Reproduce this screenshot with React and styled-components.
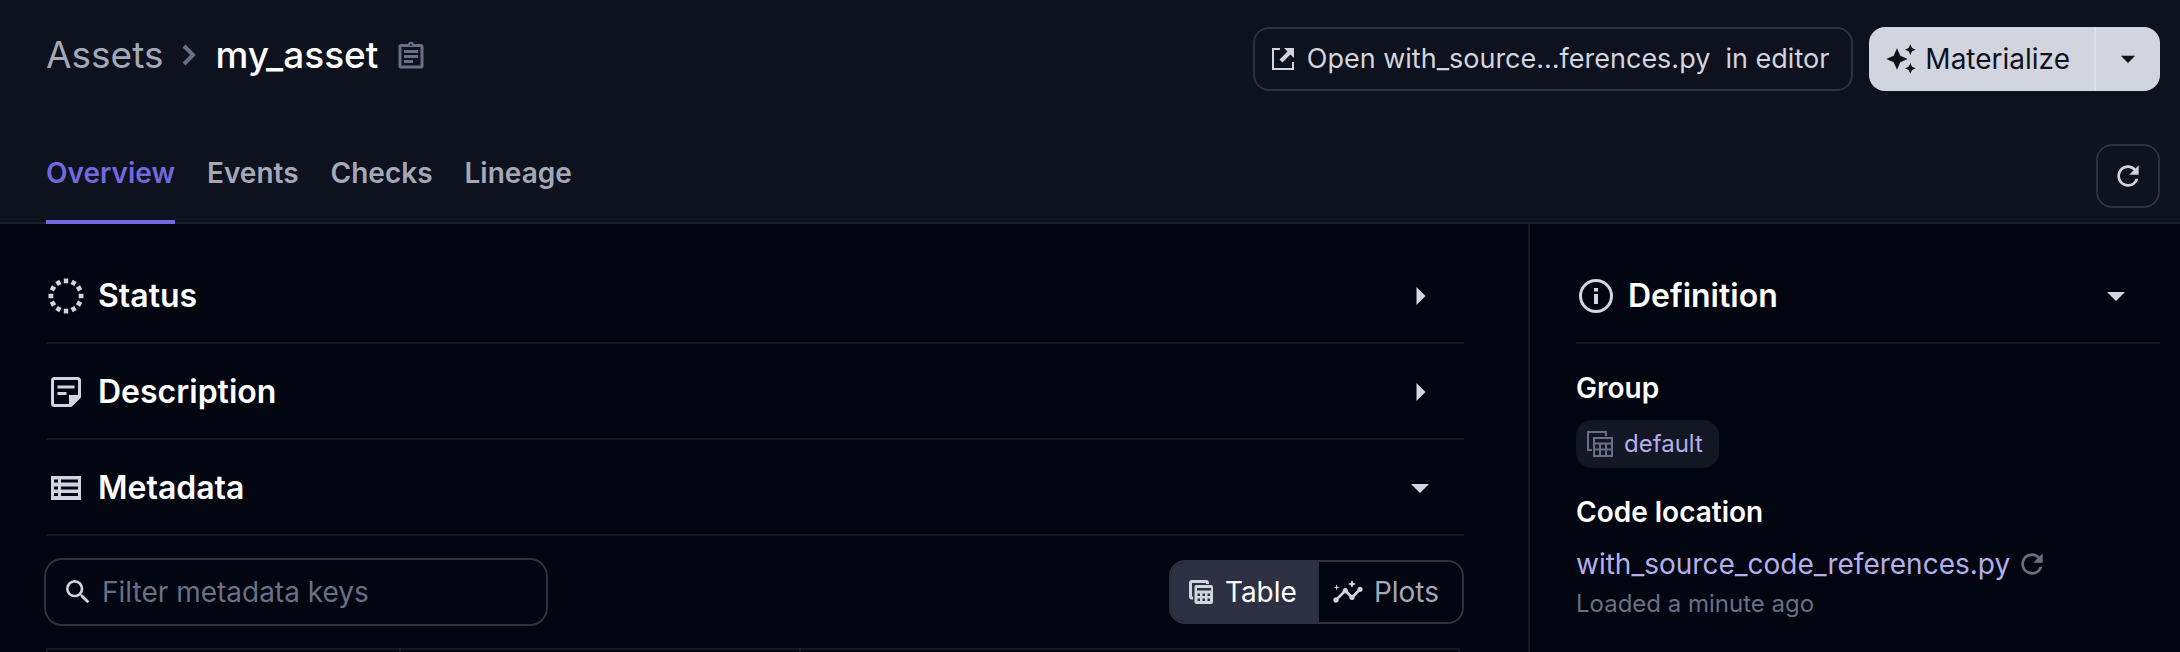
import React from "react";
import styled, { createGlobalStyle, css } from "styled-components";
import { MdAutoAwesome, MdInsights, MdRefresh, MdSearch } from "react-icons/md";

const c = {
  header: "#0e111e",
  page: "#030510",
  line: "#141724",
  headerLine: "#1b1e2b",
  control: "#2d3143",
  text: "#ffffff",
  light: "#d2d5de",
  muted: "#a4a8b7",
  dim: "#677084",
  accent: "#7169dd",
  link: "#b6aeec",
  tag: "#131623",
};

const GlobalStyle = createGlobalStyle`
  *, *::before, *::after { box-sizing: border-box; }
  body {
    margin: 0;
    overflow: hidden;
    background: ${c.page};
    color: ${c.text};
    font-family: Inter, "Liberation Sans", sans-serif;
    font-size: 28px;
    line-height: 40px;
  }
  button, input { font: inherit; color: inherit; margin: 0; }
  button { cursor: pointer; }
  a { text-decoration: none; color: inherit; }
  h1, h2, h3, p { margin: 0; }
  svg { display: block; flex: none; }
`;

const Page = styled.div`
  display: flex;
  flex-direction: column;
  height: 100vh;
`;

const Header = styled.header`
  flex: none;
  background: ${c.header};
  border-bottom: 2px solid ${c.headerLine};
  padding: 27px 20px 0 46px;
`;

const HeaderTop = styled.div`
  display: flex;
  justify-content: space-between;
  align-items: flex-start;
  height: 117px;
`;

const Breadcrumbs = styled.nav`
  display: flex;
  align-items: center;
  font-size: 37px;
  line-height: 55px;
  color: ${c.muted};

  h1 {
    font-size: inherit;
    font-weight: 500;
    color: ${c.text};
  }
`;

const CrumbChevron = styled.svg`
  margin: 0 17px;
  color: ${c.dim};
`;

const IconButton = styled.button`
  display: flex;
  padding: 0;
  margin-left: ${(p) => (p.$tight ? "6px" : "20px")};
  border: 0;
  background: none;
  color: ${c.dim};
`;

const Actions = styled.div`
  display: flex;
  gap: 16px;
`;

const Button = styled.button`
  display: flex;
  align-items: center;
  gap: 12px;
  height: 64px;
  padding: 0 22px 0 16px;
  border: 2px solid ${c.control};
  border-radius: 16px;
  background: transparent;
  color: ${c.light};
  font-size: 27px;
  white-space: pre;

  ${(p) =>
    p.$square &&
    css`
      justify-content: center;
      width: 64px;
      padding: 0;
    `}
`;

const SplitButton = styled.div`
  display: flex;
  height: 64px;
  border-radius: 16px;
  overflow: hidden;
  background: ${c.light};
  color: ${c.header};
`;

const SplitPart = styled.button`
  display: flex;
  align-items: center;
  justify-content: center;
  gap: 8px;
  border: 0;
  padding: ${(p) => (p.$menu ? "0" : "0 24px 0 16px")};
  width: ${(p) => (p.$menu ? "66px" : "auto")};
  border-left: ${(p) => (p.$menu ? "2px solid #dfe1e8" : "0")};
  background: transparent;
`;

const TabRow = styled.div`
  display: flex;
  justify-content: space-between;
  height: 78px;
`;

const Tabs = styled.nav`
  display: flex;
  gap: 32px;
  margin-bottom: -2px;
`;

const Tab = styled.a`
  padding-top: 9px;
  font-weight: 600;
  color: ${(p) => (p.$active ? c.accent : c.muted)};
  border-bottom: 4px solid ${(p) => (p.$active ? c.accent : "transparent")};
`;

const Body = styled.div`
  flex: 1;
  min-height: 0;
  display: flex;
  overflow: hidden;
`;

const Main = styled.main`
  flex: 1;
  min-width: 0;
  padding: 24px 64px 0 46px;
`;

const Aside = styled.aside`
  flex: 0 0 calc(30% - 2px);
  min-width: 0;
  border-left: 2px solid ${c.line};
  padding: 24px 20px 0 46px;
`;

const SectionHeader = styled.button`
  display: flex;
  align-items: center;
  gap: 12px;
  width: 100%;
  height: 96px;
  padding: 2px 24px 0 0;
  border: 0;
  border-bottom: 2px solid ${c.line};
  background: none;
  color: ${c.light};
  text-align: left;

  h2 {
    flex: 1;
    font-size: 32px;
    font-weight: 600;
    color: ${c.text};
  }
`;

const Toolbar = styled.div`
  display: flex;
  align-items: center;
  justify-content: space-between;
  height: 112px;
`;

const SearchBox = styled.label`
  display: flex;
  align-items: center;
  gap: 8px;
  width: 504px;
  height: 68px;
  margin-left: -2px;
  padding: 0 16px;
  border: 2px solid ${c.control};
  border-radius: 18px;
  color: ${c.light};

  input {
    flex: 1;
    min-width: 0;
    padding: 0;
    border: 0;
    outline: 0;
    background: none;
  }
  input::placeholder {
    color: ${c.dim};
    opacity: 1;
  }
`;

const Segmented = styled.div`
  display: flex;
  height: 64px;
  border: 2px solid ${c.control};
  border-radius: 16px;
  overflow: hidden;
`;

const Segment = styled.button`
  display: flex;
  align-items: center;
  gap: 10px;
  border: 0;
  padding: ${(p) => (p.$active ? "0 22px 0 16px" : "0 23px 0 13px")};
  background: ${(p) => (p.$active ? c.control : "transparent")};
  color: ${(p) => (p.$active ? c.text : c.muted)};

  svg {
    color: ${c.light};
  }
`;

const DataTable = styled.table`
  width: calc(100% - 4px);
  border-collapse: collapse;
  table-layout: fixed;

  th {
    height: 64px;
    padding: 0;
    border: 2px solid ${c.line};
  }
  th:nth-child(1) { width: 25%; }
  th:nth-child(2) { width: calc(85% / 3); }
`;

const Field = styled.section`
  padding-top: 24px;

  h3 {
    font-size: 28px;
    line-height: 40px;
    font-weight: 600;
  }
`;

const Tag = styled.a`
  display: inline-flex;
  align-items: center;
  gap: 10px;
  height: 48px;
  margin-top: 12px;
  padding: 0 16px 0 10px;
  border-radius: 16px;
  background: ${c.tag};
  color: ${c.link};
  font-size: 24px;
  vertical-align: top;

  svg {
    color: ${c.dim};
  }
`;

const LocationRow = styled.div`
  display: flex;
  align-items: center;
  margin-top: 12px;
  color: ${c.link};
`;

const Note = styled.p`
  font-size: 24px;
  color: ${c.dim};
`;

const ClipboardIcon = () => (
  <svg width="26" height="28" viewBox="0 0 26 28" fill="none" stroke="currentColor" strokeWidth="3">
    <rect x="2" y="4.500" width="22" height="21.500" rx="1" />
    <path d="M6 10.500h14M6 15.500h14M6 20.500h9" />
    <path d="M8.500 5c0-2 2-1.800 2.500-2 .5-1.700 3.500-1.700 4 0 .5.200 2.500 0 2.500 2z" fill="currentColor" stroke="none" />
    <circle cx="13" cy="3.500" r="2.800" fill="currentColor" stroke="none" />
    <circle cx="13" cy="4" r="1" fill={c.header} stroke="none" />
  </svg>
);

const OpenIcon = () => (
  <svg width="24" height="24" viewBox="0 0 24 24" fill="none" stroke="currentColor">
    <path d="M9 2H2v20h20v-7" strokeWidth="2" />
    <path d="M10 14 19 5" strokeWidth="4" />
    <path d="M13 1h10v10z" fill="currentColor" stroke="none" />
  </svg>
);

const Caret = ({ size, direction = "down" }) => (
  <svg width={size} height={size} viewBox="0 0 40 40" fill="currentColor">
    <path d={direction === "down" ? "M11 16h18l-9 9z" : "M16.500 11v18l9-9z"} />
  </svg>
);

const StatusIcon = () => (
  <svg width="40" height="40" viewBox="0 0 40 40" stroke="currentColor" strokeWidth="4.400">
    {Array.from({ length: 12 }, (_, i) => (
      <path key={i} d="M20 2.500v4.800" transform={`rotate(${i * 30} 20 20)`} />
    ))}
  </svg>
);

const NoteIcon = () => (
  <svg width="40" height="40" viewBox="0 0 40 40" fill="none" stroke="currentColor" strokeWidth="3">
    <path d="M25 33.500H8.500a2 2 0 0 1-2-2v-23a2 2 0 0 1 2-2h23a2 2 0 0 1 2 2V25z" strokeLinejoin="round" />
    <path d="M11.500 15h17M11.500 21.500h9" />
    <path d="M23 23h11v2.500L25.500 34H23z" fill="currentColor" stroke="none" />
  </svg>
);

const ListIcon = () => (
  <svg width="40" height="40" viewBox="0 0 40 40">
    <path
      fill="currentColor"
      fillRule="evenodd"
      d="M5 8h30v24H5zM8 11.500h4v3H8zM15 11.500h17v3H15zM8 18.500h4v3H8zM15 18.500h17v3H15zM8 25h4v3H8zM15 25h17v3H15z"
    />
  </svg>
);

const InfoIcon = () => (
  <svg width="40" height="40" viewBox="0 0 40 40" fill="none" stroke="currentColor">
    <circle cx="20" cy="20" r="15.500" strokeWidth="3" />
    <path d="M20 18v10M20 12v3.500" strokeWidth="4" />
  </svg>
);

const GridIcon = ({ solid }) =>
  solid ? (
    <svg width="28" height="28" viewBox="0 0 28 28">
      <path d="M6 20H5a1.500 1.500 0 0 1-1.500-1.500V5A1.500 1.500 0 0 1 5 3.500h14A1.500 1.500 0 0 1 20.500 5v1" fill="none" stroke="currentColor" strokeWidth="3" />
      <path
        fill="currentColor"
        fillRule="evenodd"
        d="M9.500 7h14.500a2 2 0 0 1 2 2v15a2 2 0 0 1-2 2H9.500a2 2 0 0 1-2-2V9a2 2 0 0 1 2-2zM10 10h14v2.500H10zM10.500 15.500h2.500v2.500h-2.500zM15.500 15.500h2.500v2.500h-2.500zM20.500 15.500h2.500v2.500h-2.500zM10.500 20.500h2.500v2.500h-2.500zM15.500 20.500h2.500v2.500h-2.500zM20.500 20.500h2.500v2.500h-2.500z"
      />
    </svg>
  ) : (
    <svg width="28" height="28" viewBox="0 0 28 28" fill="none" stroke="currentColor" strokeWidth="2">
      <path d="M6 20H2V2h18v4" />
      <path d="M8 8h18v18H8zM8 13.500h18M8 19.500h18M14 13.500V26M20 13.500V26" />
    </svg>
  );

const Section = ({ icon, title, open }) => (
  <SectionHeader type="button" aria-expanded={!!open}>
    {icon}
    <h2>{title}</h2>
    <Caret size={40} direction={open ? "down" : "right"} />
  </SectionHeader>
);

export default function App() {
  return (
    <Page>
      <GlobalStyle />
      <Header>
        <HeaderTop>
          <Breadcrumbs aria-label="Breadcrumb">
            <a href="#assets">Assets</a>
            <CrumbChevron width="18" height="24" viewBox="0 0 18 24" fill="none" stroke="currentColor" strokeWidth="4">
              <path d="M4 3l9 9-9 9" />
            </CrumbChevron>
            <h1>my_asset</h1>
            <IconButton type="button" aria-label="Copy asset key">
              <ClipboardIcon />
            </IconButton>
          </Breadcrumbs>
          <Actions>
            <Button type="button">
              <OpenIcon />
              {"Open with_source…ferences.py  in editor"}
            </Button>
            <SplitButton>
              <SplitPart type="button">
                <MdAutoAwesome size={32} />
                Materialize
              </SplitPart>
              <SplitPart type="button" $menu aria-label="More materialize options">
                <Caret size={32} />
              </SplitPart>
            </SplitButton>
          </Actions>
        </HeaderTop>
        <TabRow>
          <Tabs aria-label="Asset sections">
            <Tab href="#overview" $active aria-current="page">Overview</Tab>
            <Tab href="#events">Events</Tab>
            <Tab href="#checks">Checks</Tab>
            <Tab href="#lineage">Lineage</Tab>
          </Tabs>
          <Button type="button" $square aria-label="Refresh">
            <MdRefresh size={32} />
          </Button>
        </TabRow>
      </Header>
      <Body>
        <Main>
          <Section icon={<StatusIcon />} title="Status" />
          <Section icon={<NoteIcon />} title="Description" />
          <Section icon={<ListIcon />} title="Metadata" open />
          <Toolbar>
            <SearchBox>
              <MdSearch size={32} />
              <input type="text" placeholder="Filter metadata keys" aria-label="Filter metadata keys" />
            </SearchBox>
            <Segmented>
              <Segment type="button" $active aria-pressed="true">
                <GridIcon solid />
                Table
              </Segment>
              <Segment type="button" aria-pressed="false">
                <MdInsights size={32} />
                Plots
              </Segment>
            </Segmented>
          </Toolbar>
          <DataTable>
            <thead>
              <tr>
                <th />
                <th />
                <th />
              </tr>
            </thead>
          </DataTable>
        </Main>
        <Aside>
          <Section icon={<InfoIcon />} title="Definition" open />
          <Field>
            <h3>Group</h3>
            <Tag href="#default">
              <GridIcon />
              default
            </Tag>
          </Field>
          <Field>
            <h3>Code location</h3>
            <LocationRow>
              <a href="#location">with_source_code_references.py</a>
              <IconButton type="button" $tight aria-label="Reload code location">
                <MdRefresh size={32} />
              </IconButton>
            </LocationRow>
            <Note>Loaded a minute ago</Note>
          </Field>
        </Aside>
      </Body>
    </Page>
  );
}
